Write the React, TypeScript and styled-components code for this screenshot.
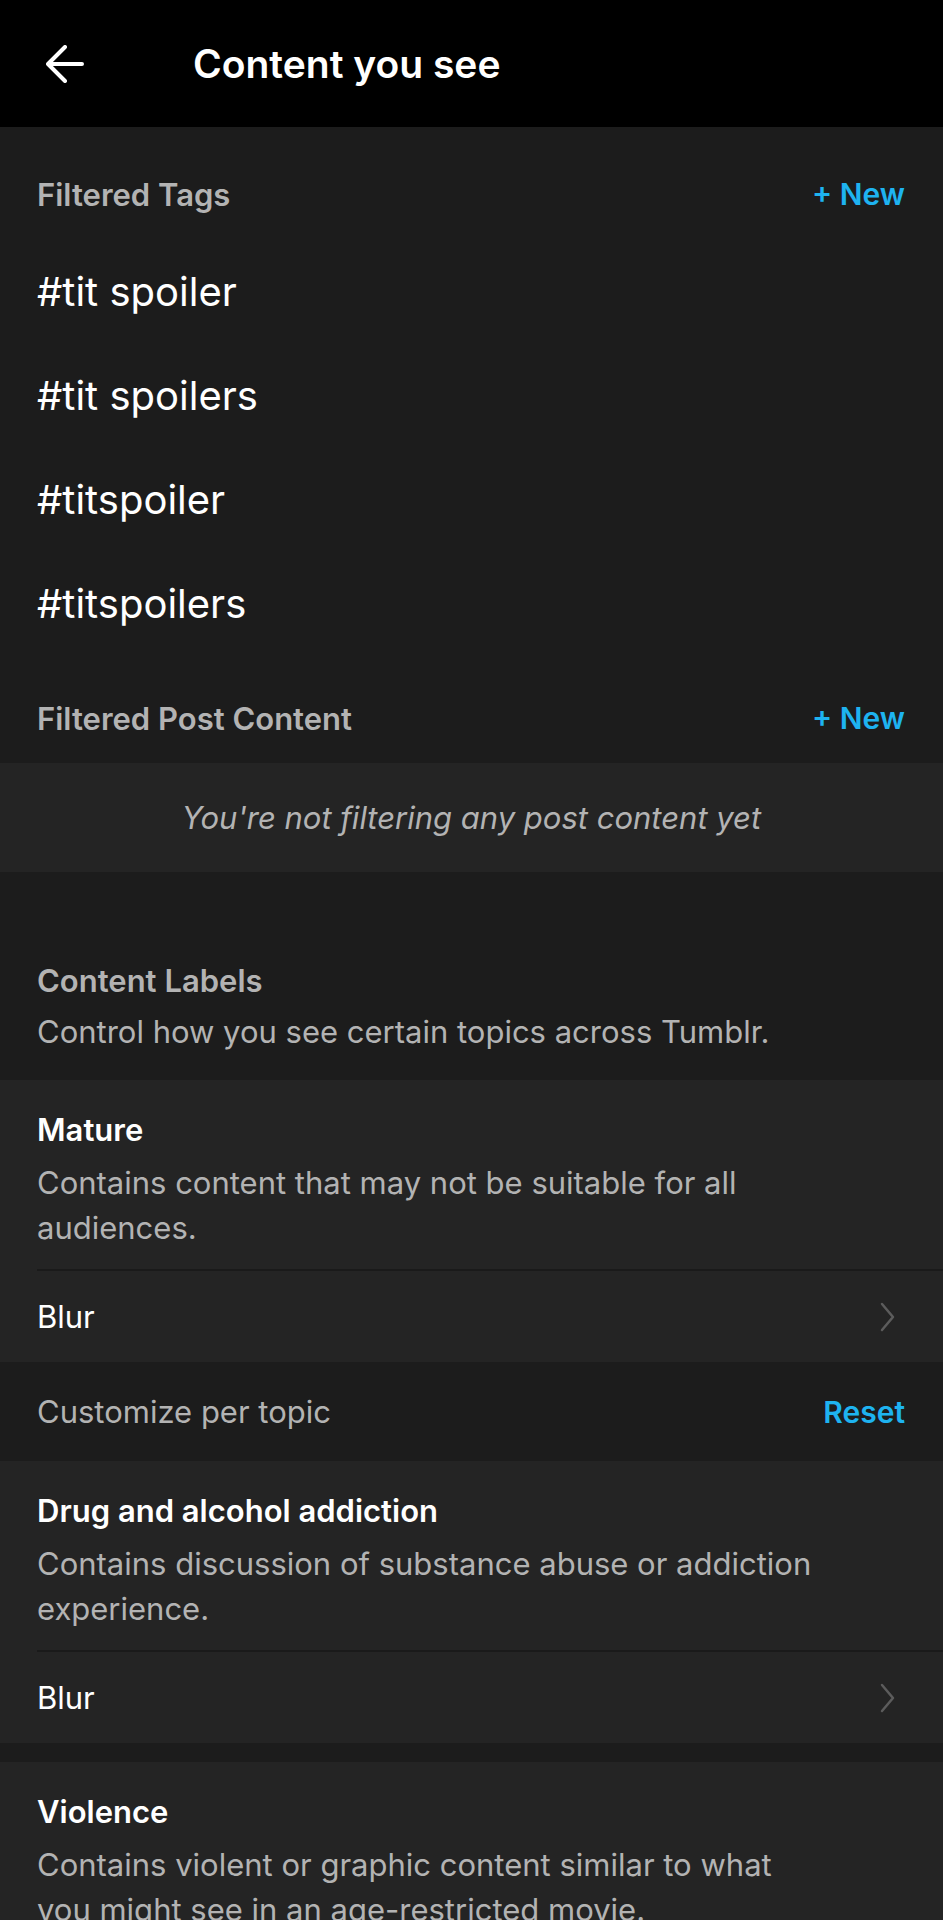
import React from 'react';
import styled, { createGlobalStyle } from 'styled-components';

const GlobalStyle = createGlobalStyle`
  html, body {
    margin: 0;
    padding: 0;
    background: #1c1c1c;
  }
  body {
    font-family: Inter, Roboto, "Liberation Sans", sans-serif;
    -webkit-font-smoothing: antialiased;
  }
`;

const Page = styled.div`
  width: 943px;
  height: 1920px;
  background: #1c1c1c;
  color: #fff;
  overflow: hidden;
`;

const TopBar = styled.header`
  height: 127px;
  background: #000;
  display: flex;
  align-items: center;
  padding-left: 46px;
  box-sizing: border-box;
`;

const BackButton = styled.button`
  all: unset;
  display: flex;
  width: 38px;
  height: 38px;
  margin-right: 109px;
`;

const Title = styled.h1`
  margin: 0;
  font-size: 39px;
  font-weight: 600;
  color: #fff;
`;

const Section = styled.section<{ $padTop?: number; $padBottom?: number }>`
  padding-top: ${({ $padTop }) => $padTop ?? 0}px;
  padding-bottom: ${({ $padBottom }) => $padBottom ?? 0}px;
`;

const SectionHead = styled.div`
  height: 90px;
  display: flex;
  align-items: center;
  justify-content: space-between;
  padding: 0 38px 0 37px;
`;

const SectionLabel = styled.span`
  font-size: 31px;
  font-weight: 600;
  color: #b3b3b3;
`;

const Action = styled.span`
  font-size: 30px;
  font-weight: 600;
  color: #1eb3f0;
`;

const TagRow = styled.div`
  height: 104px;
  display: flex;
  align-items: center;
  padding: 0 37px;
  font-size: 40px;
  color: #fff;
`;

const EmptyBox = styled.div`
  height: 109px;
  background: #242424;
  display: flex;
  align-items: center;
  justify-content: center;
  font-size: 31px;
  font-style: italic;
  color: #b3b3b3;
`;

const LabelsIntro = styled.div`
  padding: 89px 37px 28px;
`;

const IntroTitle = styled.div`
  font-size: 31px;
  line-height: 40px;
  font-weight: 600;
  color: #b3b3b3;
`;

const IntroText = styled.div`
  margin-top: 11px;
  font-size: 31px;
  line-height: 40px;
  color: #b3b3b3;
`;

const Card = styled.div<{ $gapTop?: number }>`
  background: #242424;
  margin-top: ${({ $gapTop }) => $gapTop ?? 0}px;
`;

const CardBody = styled.div`
  padding: 30px 37px 19px;
`;

const CardTitle = styled.div`
  font-size: 31px;
  line-height: 40px;
  font-weight: 600;
  color: #fff;
`;

const CardText = styled.div`
  margin-top: 10px;
  max-width: 786px;
  font-size: 31px;
  line-height: 45px;
  color: #b3b3b3;
`;

const Divider = styled.div`
  height: 2px;
  margin-left: 37px;
  background: #1a1a1a;
`;

const OptionRow = styled.div`
  height: 91px;
  display: flex;
  align-items: center;
  justify-content: space-between;
  padding: 0 48px 0 37px;
  font-size: 31px;
  color: #fff;
`;

const CustomizeRow = styled.div`
  height: 99px;
  display: flex;
  align-items: center;
  justify-content: space-between;
  padding: 0 38px 0 37px;
`;

const CustomizeLabel = styled.span`
  font-size: 31px;
  color: #b3b3b3;
`;

const BackArrow = () => (
  <svg width="38" height="38" viewBox="0 0 38 38" fill="none">
    <path
      d="M36 19H3M19 2L2 19l17 17"
      stroke="#fff"
      strokeWidth="4"
      strokeLinecap="round"
      strokeLinejoin="round"
    />
  </svg>
);

const Chevron = () => (
  <svg width="15" height="30" viewBox="0 0 15 30" fill="none">
    <path d="M2 2l11 13L2 28" stroke="#5c5c5c" strokeWidth="2.5" strokeLinecap="round" strokeLinejoin="round" />
  </svg>
);

const tags = ['#tit spoiler', '#tit spoilers', '#titspoiler', '#titspoilers'];

type Label = { title: string; text: string; option: string };

const LabelCard = ({ label, gapTop }: { label: Label; gapTop?: number }) => (
  <Card $gapTop={gapTop}>
    <CardBody>
      <CardTitle>{label.title}</CardTitle>
      <CardText>{label.text}</CardText>
    </CardBody>
    <Divider />
    <OptionRow>
      {label.option}
      <Chevron />
    </OptionRow>
  </Card>
);

const App: React.FC = () => (
  <Page>
    <GlobalStyle />
    <TopBar>
      <BackButton aria-label="Back">
        <BackArrow />
      </BackButton>
      <Title>Content you see</Title>
    </TopBar>

    <Section $padTop={22} $padBottom={18}>
      <SectionHead>
        <SectionLabel>Filtered Tags</SectionLabel>
        <Action>+ New</Action>
      </SectionHead>
      {tags.map((t) => (
        <TagRow key={t}>{t}</TagRow>
      ))}
    </Section>

    <Section>
      <SectionHead>
        <SectionLabel>Filtered Post Content</SectionLabel>
        <Action>+ New</Action>
      </SectionHead>
      <EmptyBox>You're not filtering any post content yet</EmptyBox>
    </Section>

    <LabelsIntro>
      <IntroTitle>Content Labels</IntroTitle>
      <IntroText>Control how you see certain topics across Tumblr.</IntroText>
    </LabelsIntro>

    <LabelCard
      label={{
        title: 'Mature',
        text: 'Contains content that may not be suitable for all audiences.',
        option: 'Blur',
      }}
    />

    <CustomizeRow>
      <CustomizeLabel>Customize per topic</CustomizeLabel>
      <Action>Reset</Action>
    </CustomizeRow>

    <LabelCard
      label={{
        title: 'Drug and alcohol addiction',
        text: 'Contains discussion of substance abuse or addiction experience.',
        option: 'Blur',
      }}
    />

    <LabelCard
      gapTop={19}
      label={{
        title: 'Violence',
        text: 'Contains violent or graphic content similar to what you might see in an age-restricted movie.',
        option: 'Blur',
      }}
    />
  </Page>
);

export default App;
